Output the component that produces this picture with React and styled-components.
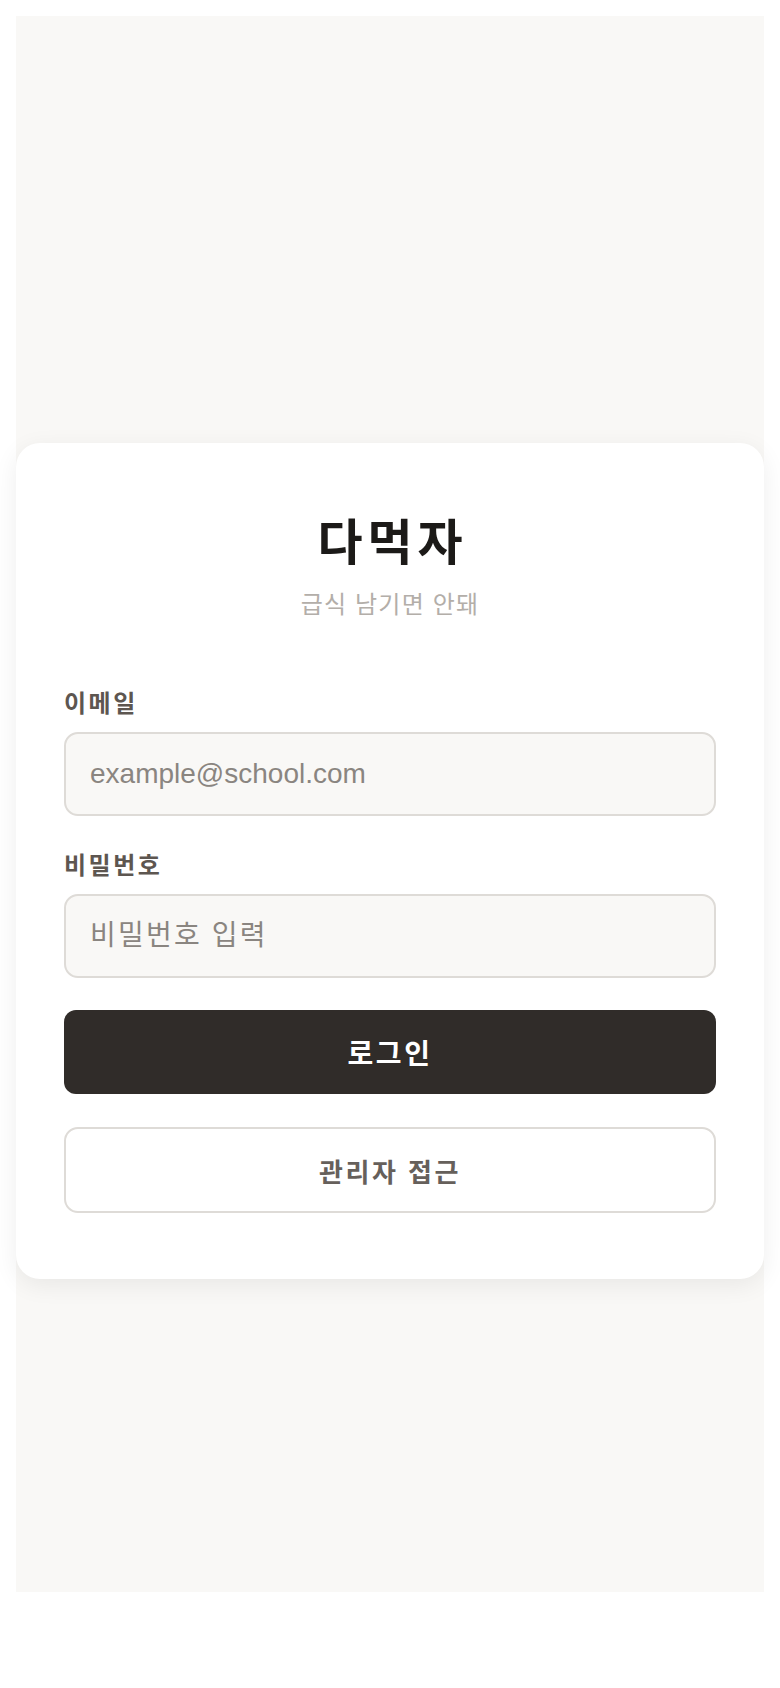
import React from "react";
import styled, { createGlobalStyle } from "styled-components";

const GlobalStyle = createGlobalStyle`
  body {
    margin: 0;
    background: #fff;
    font-family: "Liberation Sans", "Noto Sans CJK KR", sans-serif;
  }
`;

const Page = styled.div`
  margin: 16px;
  height: 1576px;
  background: #f9f8f6;
  padding-top: 427px;
  box-sizing: border-box;
`;

const Card = styled.div`
  background: #fff;
  border-radius: 24px;
  box-shadow: 0 6px 24px rgba(0, 0, 0, 0.07);
  padding: 64px 48px 66px 48px;
`;

const Header = styled.div`
  text-align: center;
  margin-bottom: 63px;
`;

const Title = styled.h1`
  margin: 0;
  font-size: 49px;
  line-height: 72px;
  font-weight: 700;
  letter-spacing: 5px;
  text-indent: 5px;
  color: #1c1a18;
`;

const Subtitle = styled.p`
  margin: 8px 0 0;
  font-size: 24px;
  line-height: 36px;
  letter-spacing: 1.2px;
  color: #b3aea9;
`;

const Field = styled.div`
  display: flex;
  flex-direction: column;
  gap: 10px;
  margin-bottom: 32px;
`;

const Label = styled.label`
  font-size: 24px;
  line-height: 36px;
  font-weight: 700;
  letter-spacing: 2.5px;
  color: #5d5650;
`;

const Input = styled.input`
  height: 84px;
  box-sizing: border-box;
  border: 2px solid #dedbd7;
  border-radius: 14px;
  background: #f9f8f6;
  padding: 0 24px;
  font-family: inherit;
  font-size: 28px;
  color: #1c1a18;
  outline: none;

  &::placeholder {
    color: #8a8580;
    letter-spacing: ${(p) => p.$spacing || "0"};
  }
`;

const Button = styled.button`
  display: block;
  width: 100%;
  box-sizing: border-box;
  height: ${(p) => (p.$outline ? "86px" : "84px")};
  margin-top: ${(p) => (p.$outline ? "33px" : "0")};
  border-radius: ${(p) => (p.$outline ? "14px" : "12px")};
  border: ${(p) => (p.$outline ? "2px solid #dedbd7" : "none")};
  background: ${(p) => (p.$outline ? "#fff" : "#302c29")};
  color: ${(p) => (p.$outline ? "#66605b" : "#fff")};
  font-family: inherit;
  font-size: ${(p) => (p.$outline ? "26px" : "28px")};
  font-weight: 700;
  letter-spacing: 2.5px;
  cursor: pointer;
`;

export default function App() {
  return (
    <>
      <GlobalStyle />
      <Page>
        <Card>
          <Header>
            <Title>다먹자</Title>
            <Subtitle>급식 남기면 안돼</Subtitle>
          </Header>
          <Field>
            <Label htmlFor="email">이메일</Label>
            <Input id="email" type="email" placeholder="example@school.com" />
          </Field>
          <Field>
            <Label htmlFor="password">비밀번호</Label>
            <Input
              id="password"
              type="password"
              placeholder="비밀번호 입력"
              $spacing="2.2px"
            />
          </Field>
          <Button type="button">로그인</Button>
          <Button type="button" $outline>
            관리자 접근
          </Button>
        </Card>
      </Page>
    </>
  );
}
